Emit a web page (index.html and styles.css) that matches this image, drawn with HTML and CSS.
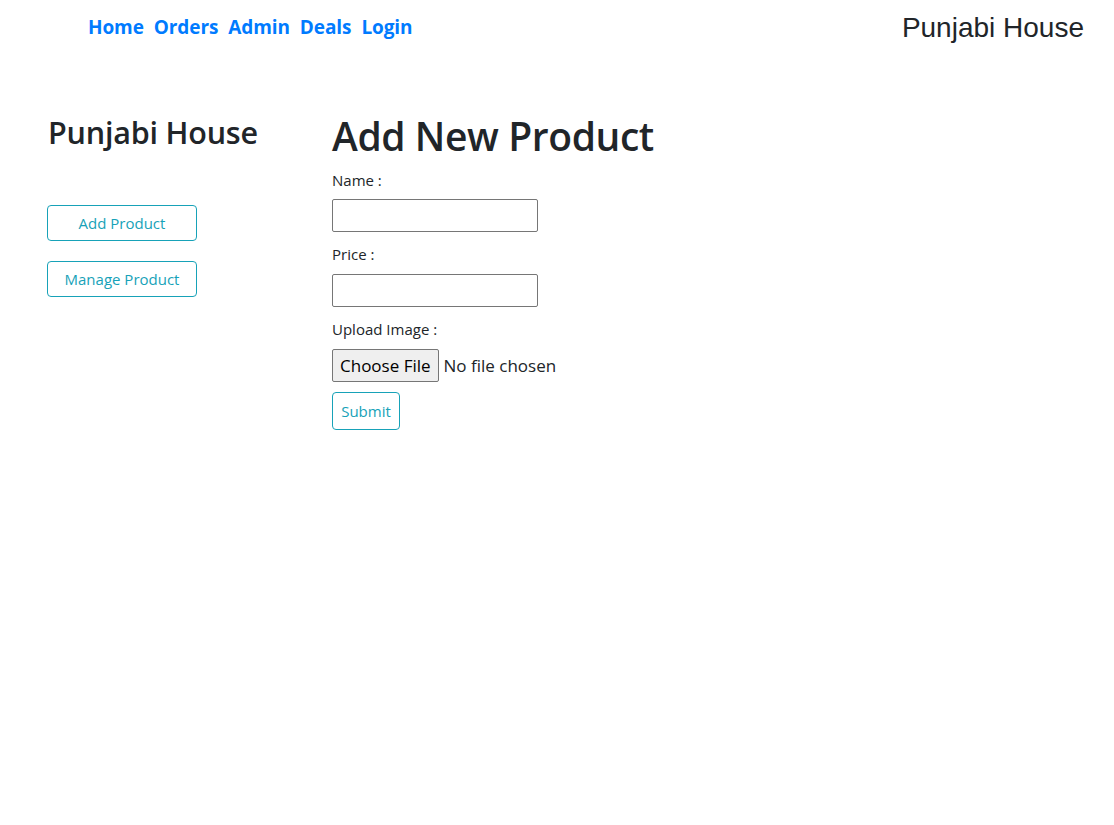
FILE: index.html
```html
<!DOCTYPE html>
<html>
<head>
<meta charset="utf-8">
<title>Punjabi House</title>
<link rel="stylesheet" href="styles.css">
</head>
<body>
<nav class="topbar">
  <ul class="nav-links">
    <li><a href="#">Home</a></li>
    <li><a href="#">Orders</a></li>
    <li><a href="#">Admin</a></li>
    <li><a href="#">Deals</a></li>
    <li><a href="#">Login</a></li>
  </ul>
  <div class="brand">Punjabi House</div>
</nav>
<main class="layout">
  <aside class="sidebar">
    <h2 class="side-title">Punjabi House</h2>
    <div class="side-buttons">
      <button class="btn-outline side-btn">Add Product</button>
      <button class="btn-outline side-btn">Manage Product</button>
    </div>
  </aside>
  <section class="content">
    <h1 class="page-title">Add New Product</h1>
    <form class="product-form">
      <label class="field-label first-label">Name :</label>
      <input class="text-input" type="text">
      <label class="field-label price-label">Price :</label>
      <input class="text-input" type="text">
      <label class="field-label upload-label">Upload Image :</label>
      <div class="file-row">
        <span class="file-btn">Choose File</span>
        <span class="file-name">No file chosen</span>
      </div>
      <button type="button" class="btn-outline submit-btn">Submit</button>
    </form>
  </section>
</main>
</body>
</html>
```
FILE: styles.css
```css
* { box-sizing: border-box; }
body {
  margin: 0;
  font-family: "Open Sans", "Noto Sans", sans-serif;
  color: #212529;
  background: #fff;
}
.topbar {
  display: flex;
  justify-content: space-between;
  align-items: center;
  height: 55px;
  padding: 1px 30px 0 88px;
}
.nav-links {
  display: flex;
  gap: 10px;
  list-style: none;
  margin: 0 0 2px 0;
  padding: 0;
}
.nav-links a {
  color: #007bff;
  text-decoration: none;
  font-weight: 700;
  font-size: 19px;
  letter-spacing: -0.1px;
}
.brand {
  font-family: "Liberation Sans", Arial, sans-serif;
  font-size: 28px;
  color: #212529;
}
.layout {
  display: grid;
  grid-template-columns: 285px 1fr;
  padding: 55px 0 0 47px;
}
.side-title {
  margin: 0;
  font-size: 30.5px;
  font-weight: 600;
  line-height: 44px;
  letter-spacing: -0.2px;
  padding-left: 1px;
}
.side-buttons {
  display: flex;
  flex-direction: column;
  gap: 20px;
  margin-top: 51px;
  align-items: flex-start;
}
.btn-outline {
  background: #fff;
  border: 1px solid #17a2b8;
  color: #17a2b8;
  border-radius: 4px;
  font-family: inherit;
  font-size: 15px;
  cursor: pointer;
}
.side-btn {
  width: 150px;
  height: 36px;
}
.page-title {
  margin: 0;
  font-size: 39px;
  font-weight: 600;
  line-height: 52px;
  letter-spacing: -0.4px;
}
.product-form {
  display: flex;
  flex-direction: column;
  align-items: flex-start;
}
.field-label {
  font-size: 15px;
  line-height: 22px;
  margin-top: 1px;
  margin-bottom: 8px;
}
.first-label {
  margin-top: 7px;
}
.price-label {
  margin-bottom: 9px;
}
.upload-label {
  margin-top: 1px;
  margin-bottom: 9px;
}
.text-input {
  width: 206px;
  height: 33px;
  border: 1px solid #767676;
  border-radius: 2px;
  margin-bottom: 10px;
}
.file-row {
  display: flex;
  align-items: center;
  gap: 5px;
  height: 33px;
  font-size: 17px;
}
.file-btn {
  height: 33px;
  display: flex;
  align-items: center;
  padding: 0 7px;
  background: #efefef;
  border: 1px solid #767676;
  border-radius: 2px;
  color: #000;
}
.file-name { color: #212529; }
.submit-btn {
  margin-top: 10px;
  width: 68px;
  height: 38px;
}
```
